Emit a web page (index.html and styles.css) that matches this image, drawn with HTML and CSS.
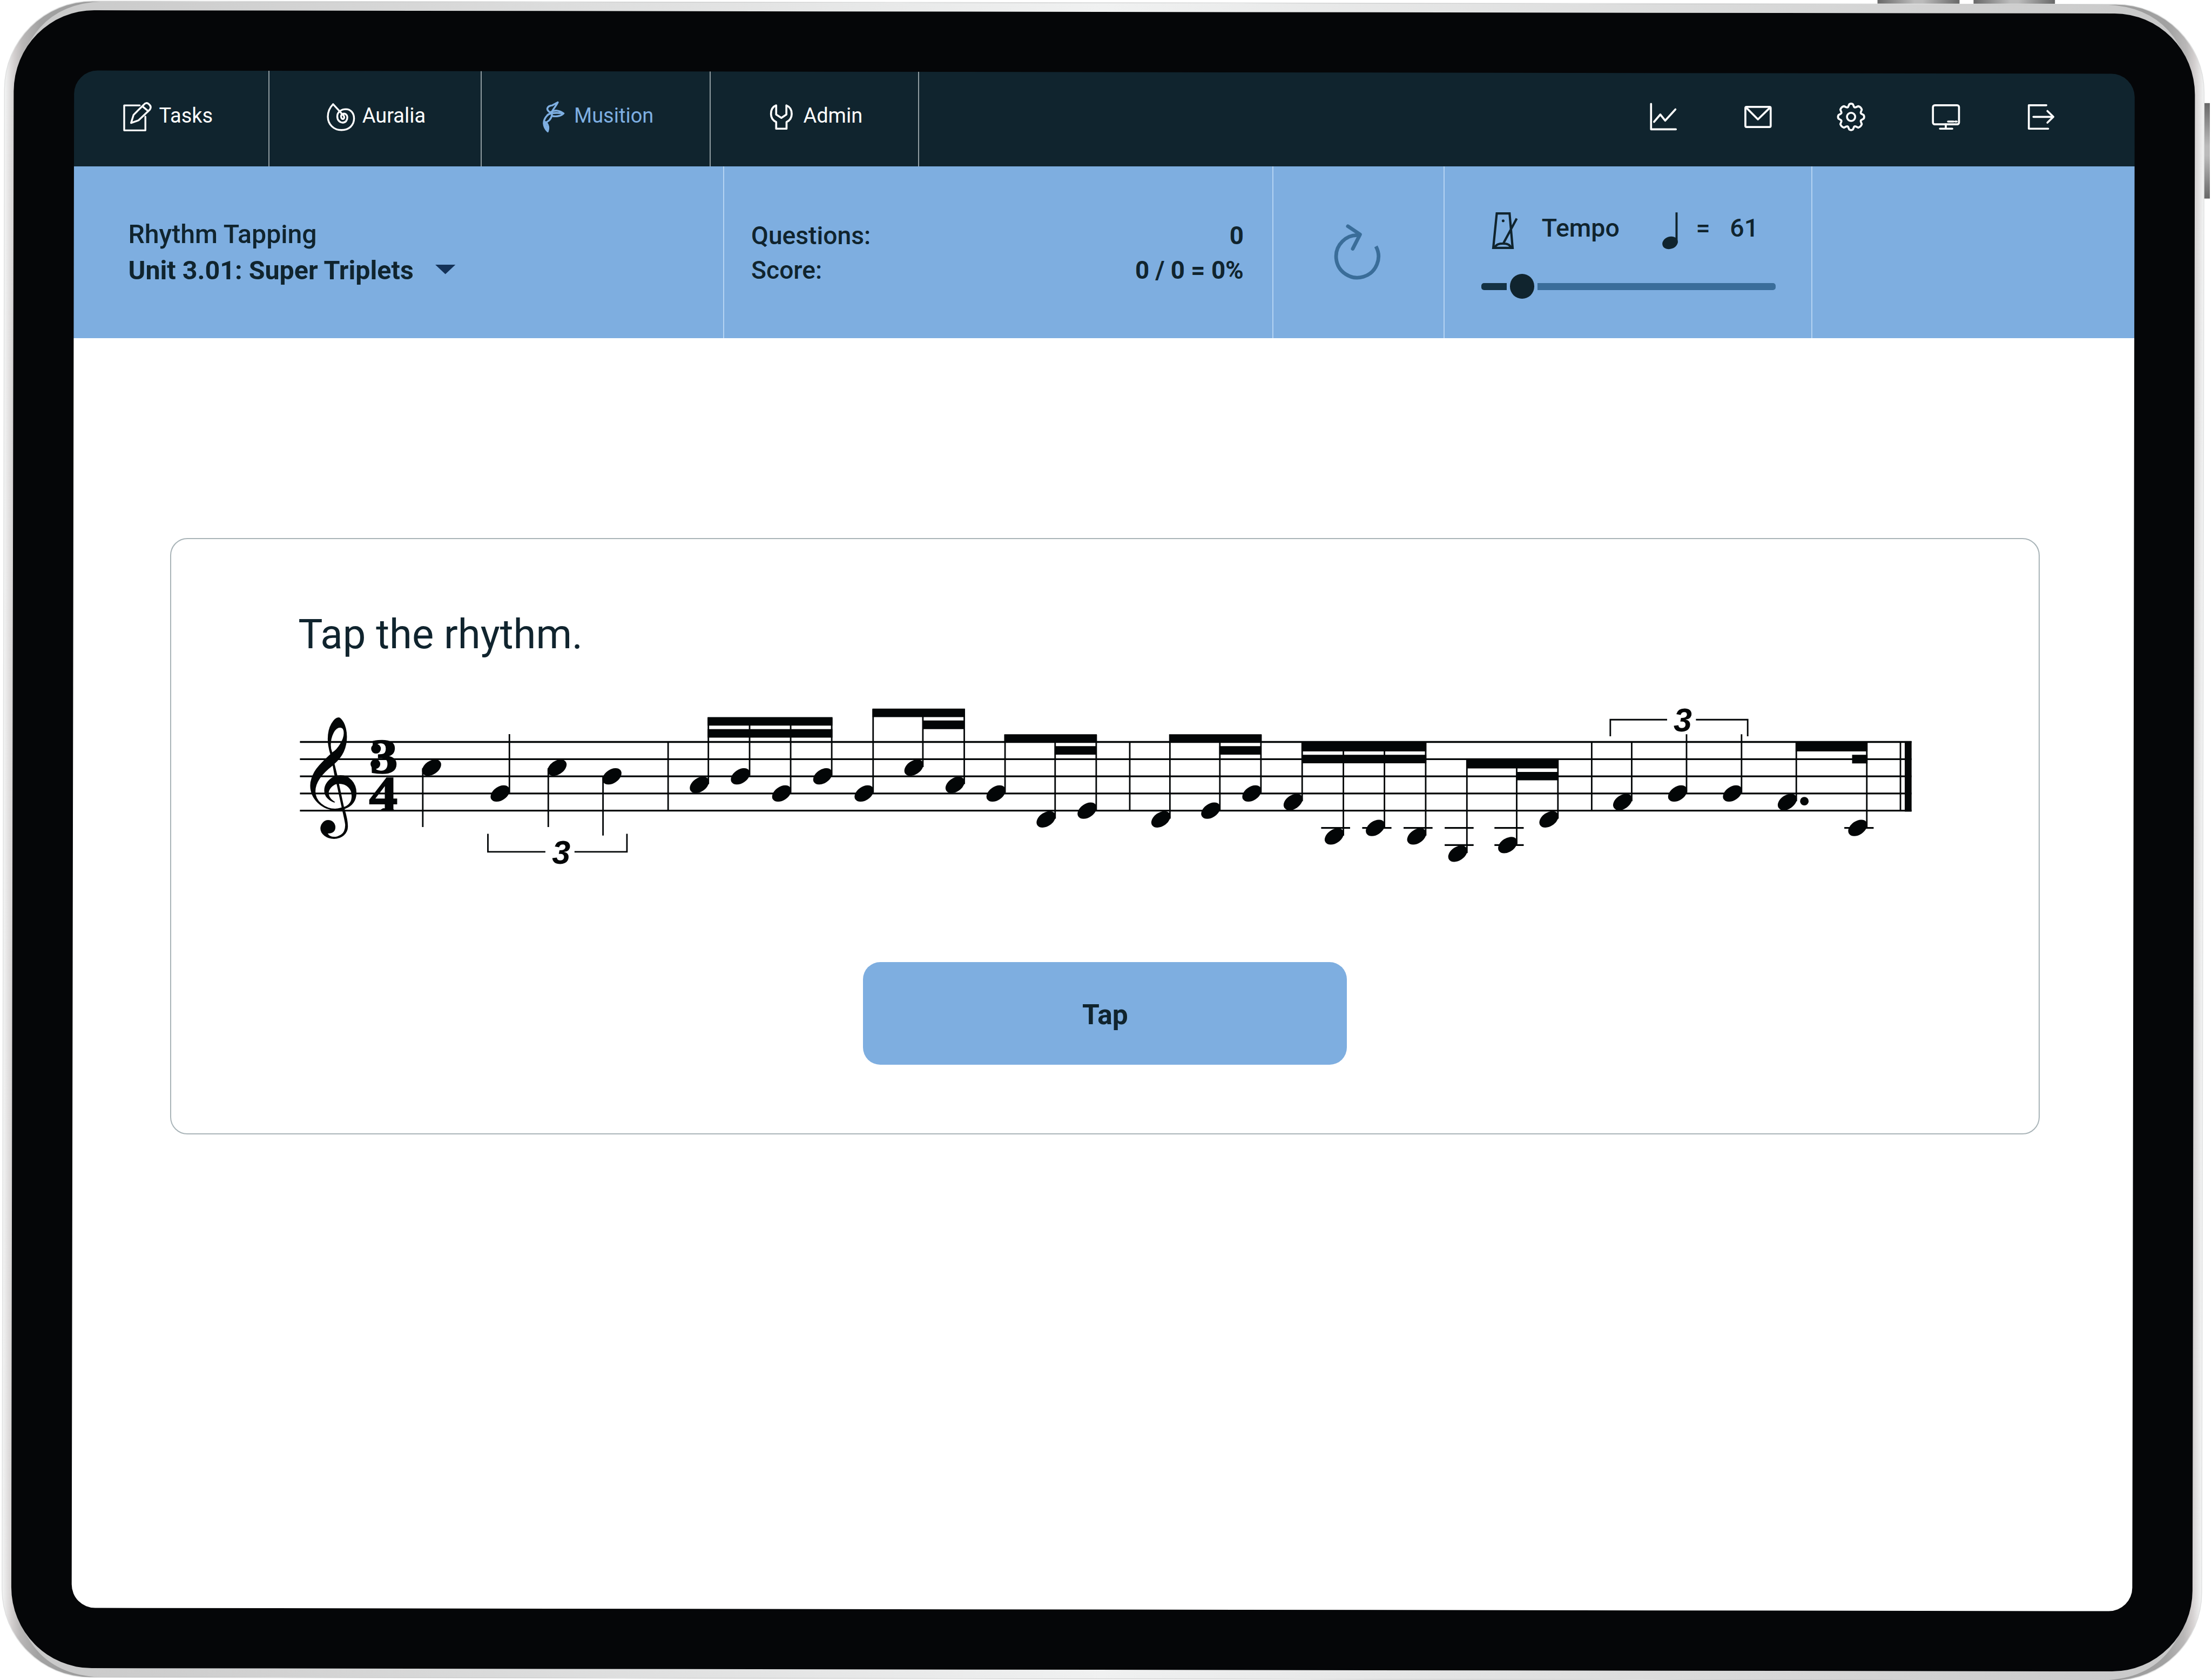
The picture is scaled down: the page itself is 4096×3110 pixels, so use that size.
FILE: index.html
```html
<!DOCTYPE html>
<html lang="en">
<head>
<meta charset="utf-8">
<title>Musition – Rhythm Tapping</title>
<link rel="stylesheet" href="styles.css">
</head>
<body>
<div class="stage">
  <div class="app">
    <nav class="topnav">
      <a class="tab tab-tasks">
        <svg class="tab-icon" viewBox="401 323.6 100 110"><path d="M459 345H408V427H477.5V382"/><path d="M430.6 402.5L438.8 376L472 343Q480 333 489 341Q499 349 492 359L455 394Z"/><path d="M469 349L487 364"/></svg>
        <span>Tasks</span>
      </a>
      <a class="tab tab-auralia">
        <svg class="tab-icon" viewBox="1067.4 323.6 100 110"><path d="M1126.5 378.7L1091.8 341C1080 353 1074.5 365 1074.5 382C1075 408 1094 426 1119.4 426C1144 426 1160.500 410 1160.500 388C1160.500 370 1149 357.500 1134 357.500C1117 357.500 1105.500 368 1105.500 381C1105.500 393 1113 401.500 1123.500 401.500C1133 401.500 1139 393 1138.500 383C1138 376 1132 371.500 1126 372C1120 372.500 1117 378 1118 383C1119 389 1124 391.500 1127 388C1129 385 1128 381 1126.500 378.700"/></svg>
        <span>Auralia</span>
      </a>
      <a class="tab tab-musition active">
        <svg class="tab-icon" viewBox="1762 323.6 100 110"><path d="M1829 335L1811 345Q1797 346 1794.500 356Q1795 363 1806 369.500M1829 335C1822 350 1812 358 1809 368L1810 380M1806 367C1818 359 1835 361 1848 371.500C1838 381 1822 383 1809 379M1795 377C1803 370 1824 368 1848 371.500M1808 369C1792 376 1783 390 1783 404C1784 416 1789 424 1796 430.500C1800 420 1799 406 1787 399M1784 404C1798 398 1807 392 1810 376M1786 404C1792 412 1794 420 1796 430"/></svg>
        <span>Musition</span>
      </a>
      <a class="tab tab-admin">
        <svg class="tab-icon" viewBox="2513.7 323.6 100 110"><path class="bold" d="M2546 345C2533 350 2529 361 2529 373C2529 386 2535 394 2546 399.500V421.500H2580V399.500C2591 394 2597 386 2597 373C2597 361 2592 350 2579.500 345V375L2563 386L2546 375Z"/></svg>
        <span>Admin</span>
      </a>
      <div class="tools">
        <svg viewBox="5406 323.6 96 110"><path d="M5413.600 340V423.500H5495M5423.500 399L5444 375L5460 395L5493.500 358"/></svg>
        <svg viewBox="5715.5 323.6 96 110"><rect x="5722.500" y="350" width="83" height="66" rx="4"/><path d="M5726 353L5763.700 391L5802.500 353"/></svg>
        <svg viewBox="6025 323.6 96 110"><circle cx="6070.500" cy="382.700" r="13.500"/><path d="M6064.500 341.500Q6070.500 337.500 6076.500 341.500L6080.500 350.500Q6083 353 6086.500 351L6094 347.500Q6103 350 6105.700 359L6102.500 367Q6101 371 6105 373L6111.700 376.700Q6115.500 382.700 6111.700 388.700L6105 392.400Q6101 394.500 6102.500 398.500L6105.700 406.400Q6103 415 6094 418L6086.500 414.400Q6083 412.500 6080.500 415L6076.500 424Q6070.500 428 6064.500 424L6060.500 415Q6058 412.500 6054.500 414.400L6047 418Q6038 415 6035.300 406.400L6038.500 398.500Q6040 394.500 6036 392.400L6029.300 388.700Q6025.500 382.700 6029.300 376.700L6036 373Q6040 371 6038.500 367L6035.300 359Q6038 350 6047 347.500L6054.500 351Q6058 353 6060.500 350.500Z"/></svg>
        <svg viewBox="6334.5 323.6 96 110"><rect x="6338.500" y="344.500" width="85.500" height="62.500" rx="6"/><path d="M6388 398H6406M6411.500 398H6416.500M6380.600 407V421.500M6361.500 421.500H6402"/></svg>
        <svg viewBox="6644 323.6 96 110"><path d="M6710 344.600H6652.500V421.500H6716M6667.500 382.600H6732M6713.500 363.500L6733 382.600L6713.500 401.500"/></svg>
      </div>
    </nav>

    <header class="controls">
      <section class="cell lesson">
        <div>Rhythm Tapping</div>
        <div class="unit"><b>Unit 3.01: Super Triplets</b><svg viewBox="0 0 66 31"><path d="M0 0H66L33 31Z"/></svg></div>
      </section>
      <section class="cell stats">
        <div class="stat"><span>Questions:</span><b>0</b></div>
        <div class="stat"><span>Score:</span><b>0 / 0 = 0%</b></div>
      </section>
      <section class="cell restart">
        <svg viewBox="4360 730 184 200"><path d="M4512 808A69.500 69.500 0 1 1 4458 772"/><path d="M4420 742L4460 769L4436 816" stroke-linejoin="round" stroke-linecap="round"/></svg>
      </section>
      <section class="cell tempo">
        <div class="tempo-row">
          <svg class="metronome" viewBox="4885 675.2 100 144"><path d="M4909 698.500H4951L4961 811.500H4897.500ZM4974.500 715L4930 798M4903 809Q4908 797 4929 797Q4950 797 4955 809"/><circle cx="4930" cy="722.600" r="4.500"/></svg>
          <span>Tempo</span>
          <svg class="quarter" viewBox="5445 675.2 60 144"><path d="M5497.200 695V795"/><ellipse cx="5476" cy="794.700" rx="26" ry="20" transform="rotate(-20 5476 794.700)"/></svg>
          <span>=</span>
          <span>61</span>
        </div>
        <div class="slider"><i class="fill"></i><i class="thumb"></i><i class="rest"></i></div>
      </section>
    </header>

    <main class="content">
      <article class="card">
        <h1>Tap the rhythm.</h1>
        <svg class="score" viewBox="960 2300 5340 560">
          <defs><ellipse id="n" rx="34.500" ry="22.500" transform="rotate(-34)"/></defs>
          <g class="staff">
            <path d="M983.500 2433.700H6269M983.500 2490.200H6269M983.500 2546.500H6269M983.500 2602.700H6269M983.500 2659H6269"/>
            <path d="M4332.700 2715.500H4427.600M4467.300 2715.500H4563.300M4603 2715.500H4698M4737.800 2715.500H4832.700M4737.800 2771.700H4832.700M4901 2715.500H4997M4901 2771.700H4997M6048.400 2715.500H6144.600"/>
          </g>
          <text class="clef" transform="translate(1081 2653.500) scale(1.08 1)">𝄞</text>
          <g class="meter">
            <text transform="translate(1259 2535) scale(1.14 1)">3</text>
            <text transform="translate(1257 2657) scale(1.17 1)">4</text>
            <circle cx="1233" cy="2456" r="16"/><circle cx="1231" cy="2506" r="16"/>
            <path d="M1241 2660L1256 2651H1285L1299 2660Z"/>
          </g>
          <path class="bar" d="M2191 2433V2660M3705 2433V2660M5220 2433V2660M6232.500 2433V2660"/>
          <rect x="6246.600" y="2431" width="22.500" height="231"/>
          <path class="stem" d="M1386.400 2520V2712.500M1670.500 2408V2600M1798 2520V2712.500M1977.500 2548V2740.500
            M2323 2354V2572M2458.200 2354V2544M2592.900 2354V2600M2727.600 2354V2544
            M2863.300 2326V2600M3026.500 2326V2516M3162.200 2326V2572
            M3296 2410V2600M3460.200 2410V2685M3595 2410V2657
            M3836.700 2410V2685M4000.500 2410V2657M4135.200 2410V2600
            M4270.400 2436V2628M4405.600 2436V2741M4540.300 2436V2713M4675.500 2436V2741
            M4810.700 2492V2798M4974 2492V2769M5109.200 2492V2685
            M5351.200 2434V2628M5531 2408.500V2600M5711.400 2408.500V2600M5891 2436V2628M6122.200 2436V2713"/>
          <path class="beam" d="M2320.500 2352.300H2730V2380H2320.500ZM2320.500 2391.600H2730V2419.500H2320.500Z
            M2861 2324.200H3164.500V2352.300H2861ZM3025 2363.500H3163V2391.500H3025Z
            M3293.500 2408.500H3597V2436H3293.500ZM3458.500 2447.600H3597V2475.400H3458.500Z
            M3834 2408.500H4137.500V2436H3834ZM3998.500 2447.600H4137V2475.400H3998.500Z
            M4268.200 2434H4677.600V2464.700H4268.200ZM4268.200 2475.900H4677.600V2503.700H4268.200Z
            M4809 2490H5111.300V2520.500H4809ZM4972.500 2532H5111V2559.500H4972.500Z
            M5888.600 2434H6124.600V2464.700H5888.600ZM6074 2475.900H6124.600V2504.300H6074Z"/>
          <use href="#n" transform="translate(1415.300 2518)"/><use href="#n" transform="translate(1640 2602.700)"/><use href="#n" transform="translate(1826.800 2518)"/><use href="#n" transform="translate(2006.800 2546.500)"/>
          <use href="#n" transform="translate(2293.400 2574.500)"/><use href="#n" transform="translate(2428 2546.500)"/><use href="#n" transform="translate(2563.300 2602.700)"/><use href="#n" transform="translate(2698 2546.500)"/>
          <use href="#n" transform="translate(2833.700 2602.700)"/><use href="#n" transform="translate(2997 2518)"/><use href="#n" transform="translate(3132 2574.500)"/>
          <use href="#n" transform="translate(3266.300 2602.700)"/><use href="#n" transform="translate(3430.600 2687.500)"/><use href="#n" transform="translate(3565 2659)"/>
          <use href="#n" transform="translate(3807 2687.500)"/><use href="#n" transform="translate(3970.500 2659)"/><use href="#n" transform="translate(4105.300 2602.700)"/>
          <use href="#n" transform="translate(4240.800 2630.500)"/><use href="#n" transform="translate(4375.600 2743.500)"/><use href="#n" transform="translate(4510.500 2715.500)"/><use href="#n" transform="translate(4646 2743.500)"/>
          <use href="#n" transform="translate(4780.700 2800)"/><use href="#n" transform="translate(4944.400 2771.800)"/><use href="#n" transform="translate(5079.600 2687.500)"/>
          <use href="#n" transform="translate(5321.400 2630.500)"/><use href="#n" transform="translate(5501.700 2602.700)"/><use href="#n" transform="translate(5681.600 2602.700)"/><use href="#n" transform="translate(5861.500 2630.500)"/><use href="#n" transform="translate(6092.500 2715.500)"/>
          <circle cx="5917.400" cy="2628" r="14"/>
          <path class="bracket" d="M1600 2734.800V2794H1788.500M1884 2794H2056V2734.800M5281 2415V2360.700H5467.300M5561.800 2360.700H5731.500V2415"/>
          <text class="tuplet" transform="translate(1840.500 2833) scale(1 1)">3</text>
          <text class="tuplet" transform="translate(5518.500 2399.500) scale(1 1)">3</text>
        </svg>
        <button class="tap">Tap</button>
      </article>
    </main>
  </div>

  <svg class="device" viewBox="0 0 7254 5508" preserveAspectRatio="none">
    <defs>
      <linearGradient id="key" x1="0" x2="1" y1="0" y2="0"><stop offset="0" stop-color="#686868"/><stop offset=".45" stop-color="#bbb"/><stop offset=".55" stop-color="#bbb"/><stop offset="1" stop-color="#686868"/></linearGradient>
      <linearGradient id="keyv" x1="0" x2="0" y1="0" y2="1"><stop offset="0" stop-color="#686868"/><stop offset=".45" stop-color="#bbb"/><stop offset=".55" stop-color="#bbb"/><stop offset="1" stop-color="#686868"/></linearGradient>
      <linearGradient id="side" gradientUnits="userSpaceOnUse" x1="12" x2="7223" y1="0" y2="0"><stop offset="0" stop-color="#f2f3f3"/><stop offset=".0042" stop-color="#d3cfcf"/><stop offset=".008" stop-color="#b9b7b7"/><stop offset=".016" stop-color="#a2a2a2"/><stop offset=".04" stop-color="#9a9a9a"/><stop offset=".96" stop-color="#9a9a9a"/><stop offset=".984" stop-color="#a2a2a2"/><stop offset=".992" stop-color="#b9b7b7"/><stop offset=".9958" stop-color="#d3cfcf"/><stop offset="1" stop-color="#f2f3f3"/></linearGradient>
      <linearGradient id="rim" gradientUnits="userSpaceOnUse" x1="41" x2="7194" y1="0" y2="0"><stop offset="0" stop-color="#c8c8c8"/><stop offset=".5" stop-color="#f0f1f1"/><stop offset="1" stop-color="#c8c8c8"/></linearGradient>
    </defs>
    <rect x="6157" y="-20" width="269" height="34" fill="url(#key)"/>
    <rect x="6472" y="-20" width="267" height="34" fill="url(#key)"/>
    <rect x="7226" y="338" width="21" height="313" fill="url(#keyv)"/>
    <g transform="rotate(.092 3620 2757)" fill-rule="evenodd">
      <path fill="#dfe0e0" d="M9.500 297A290 290 0 0 1 299.500 7.500H6935.500A290 290 0 0 1 7225.500 297V5216A290 290 0 0 1 6935.500 5506H299.500A290 290 0 0 1 9.500 5216ZM160 160V5350H7075V160Z"/>
      <path fill="url(#side)" d="M12 299A288 288 0 0 1 300 10H6935A288 288 0 0 1 7223 299V5214A288 288 0 0 1 6935 5503.500H300A288 288 0 0 1 12 5214ZM160 160V5350H7075V160Z"/>
      <path fill="url(#rim)" d="M41 330Q70 20 330 10H6905Q7165 20 7194 330V5184Q7165 5494 6905 5503.500H330Q70 5494 41 5184ZM160 160V5350H7075V160Z"/>
      <path fill="#050608" d="M41 305A264 266 0 0 1 305 39H6930A264 266 0 0 1 7194 305V5209A264 266 0 0 1 6930 5474.500H305A264 266 0 0 1 41 5209ZM239 313A77 77 0 0 1 316 236.500H6919.500A77 77 0 0 1 6996.500 313V5200A77 77 0 0 1 6919.500 5277H316A77 77 0 0 1 239 5200Z"/>
    </g>
  </svg>
</div>
</body>
</html>
```
FILE: styles.css
```css
* { box-sizing: border-box; }
body { margin: 0; background: #fff; font-family: Roboto, "Liberation Sans", sans-serif; color: #10242e; }
svg { display: block; flex: none; overflow: visible; }
.stage { position: relative; width: 4096px; height: 3110px; overflow: hidden; padding: 128px 136px 0 130px; }
.device { position: absolute; inset: 0; width: 4096px; height: 3110px; pointer-events: none; }
.app { width: 3830px; }

.topnav { display: flex; height: 180px; background: #10242e; color: #fff; }
.tab { display: flex; align-items: center; gap: 11.5px; padding-bottom: 8px; border-right: 2.5px solid #909ca1; font-size: 38px; line-height: 45px; white-space: nowrap; }
.tab-tasks { width: 368.5px; padding-left: 96.4px; }
.tab-auralia { width: 393.5px; padding-left: 104.2px; }
.tab-musition { width: 423.5px; padding-left: 103px; }
.tab-admin { width: 386.1px; padding-left: 103.9px; }
.tab.active { color: #7eafe2; }
.tab-icon { width: 56.5px; height: 62.1px; fill: none; stroke: currentColor; stroke-width: 6; stroke-linejoin: round; stroke-linecap: round; }
.tab-icon .bold { stroke-width: 6.5; }
.tools { display: flex; align-items: center; gap: 120.5px; margin-left: auto; padding: 0 154.2px 8.4px 0; }
.tools svg { width: 54.2px; height: 62.1px; fill: none; stroke: #fff; stroke-width: 6.5; stroke-linejoin: round; stroke-linecap: round; }

.controls { display: flex; height: 317.7px; background: #7eaee0; font-weight: 500; white-space: nowrap; }
.cell { border-right: 2.2px solid #b4d3f2; }
.lesson { width: 1210.6px; padding: 91.6px 0 0 107.5px; font-size: 48.2px; line-height: 67.4px; }
.unit { display: flex; align-items: center; gap: 40px; }
.unit b { font-size: 48.4px; }
.unit svg { width: 37.4px; height: 17.5px; margin-bottom: 4px; fill: #143258; }
.stats { width: 1017.3px; padding: 97px 53px 0 50.5px; font-size: 46.2px; line-height: 63.6px; }
.stat { display: flex; justify-content: space-between; }
.stat b { font-size: 45.7px; }
.restart { width: 317.2px; padding: 104.2px 0 0 104px; }
.restart svg { width: 103.9px; height: 112.9px; fill: none; stroke: #3a6d99; stroke-width: 12; }
.tempo { width: 681px; padding: 73.8px 0 0 68px; }
.tempo-row { display: grid; grid-template-columns: 96.4px 219.8px 65.9px 62.9px auto; align-items: center; height: 81.3px; padding-left: 15.3px; font-size: 46.5px; line-height: 55px; }
.metronome { width: 56.5px; height: 81.3px; fill: none; stroke: #10242e; stroke-width: 7.5; }
.metronome circle { fill: #10242e; stroke: none; }
.quarter { width: 33.9px; height: 81.3px; fill: #10242e; stroke: #10242e; stroke-width: 7; }
.quarter ellipse { stroke: none; }
.slider { display: flex; align-items: center; height: 46px; margin-top: 44.3px; }
.fill { width: 47px; height: 12.4px; background: #143244; border-radius: 5px 0 0 5px; }
.thumb { width: 45.8px; height: 45.8px; margin: 0 5.6px; border-radius: 50%; background: #10242e; }
.rest { width: 440.8px; height: 12.4px; background: #3a6d9a; border-radius: 0 5px 5px 0; }

.content { height: 2362px; padding: 370.5px 0 0 185.3px; background: #fff; }
.card { width: 3461.5px; height: 1103.4px; padding: 131.3px 0 0 224.3px; border: 2.5px solid #a9b4b8; border-radius: 32px; }
h1 { margin: 0 0 78.7px; padding-left: 10.6px; font-size: 76px; line-height: 90px; font-weight: 400; }
.score { width: 3015.3px; height: 316.2px; fill: #030607; }
.staff { stroke: #030607; stroke-width: 5.8; }
.stem, .bar, .bracket { fill: none; stroke: #030607; stroke-width: 5; }
.clef { font: 333px "DejaVu Sans", serif; text-anchor: middle; }
.meter text { font: 700 161px "Liberation Serif", serif; text-anchor: middle; stroke: #030607; stroke-width: 3; }
.tuplet { font: italic 700 108px "Liberation Sans", sans-serif; text-anchor: middle; }
.tap { display: block; width: 896px; height: 190px; margin: 166.3px 0 0 1056.8px; padding: 6px 0 0; border: 0; border-radius: 32px; background: #7eaee0; color: #10242e; font: 700 51.5px/60px Roboto, sans-serif; }
```
